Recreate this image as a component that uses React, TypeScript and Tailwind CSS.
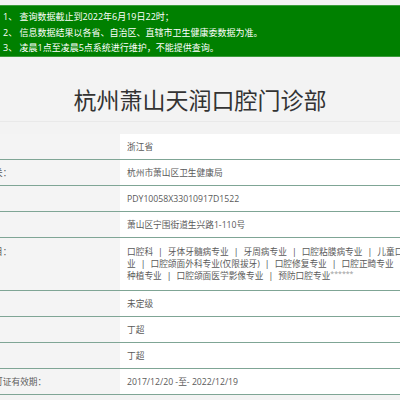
const rows: { label: string; value: string }[] = [
  { label: "省份：", value: "浙江省" },
  { label: "登记机关：", value: "杭州市萧山区卫生健康局" },
  { label: "登记号：", value: "PDY10058X33010917D1522" },
  { label: "地址：", value: "萧山区宁围街道生兴路1-110号" },
];

const rowsAfter: { label: string; value: string }[] = [
  { label: "等级：", value: "未定级" },
  { label: "法人：", value: "丁超" },
  { label: "负责人：", value: "丁超" },
  { label: "执业许可证有效期：", value: "2017/12/20 -至- 2022/12/19" },
];

const subjectLines = [
  ["口腔科", "牙体牙髓病专业", "牙周病专业", "口腔粘膜病专业", "儿童口腔专"],
  ["业", "口腔颌面外科专业(仅限拔牙)", "口腔修复专业", "口腔正畸专业", "口腔"],
  ["种植专业", "口腔颌面医学影像专业", "预防口腔专业"],
];

function Row({ label, children, tall }: { label: string; children: React.ReactNode; tall?: boolean }) {
  return (
    <div className="flex border-b border-[#7fa595]">
      <div
        className={`w-[160px] shrink-0 bg-[#f4f4f4] pl-[8px] leading-[12px] whitespace-nowrap ${
          tall ? "py-[8px]" : "py-[6.5px]"
        }`}
      >
        {label}
      </div>
      <div className={`flex-1 bg-white pl-[7px] leading-[12px] ${tall ? "py-[8px]" : "py-[6.5px]"}`}>
        {children}
      </div>
    </div>
  );
}

export default function App() {
  return (
    <div
      className="h-[400px] w-[400px] overflow-hidden bg-[#f3f3f3] pt-[5px] text-[8.7px] text-[#5a5a5a]"
      style={{ fontFamily: '"Open Sans", "Noto Sans CJK SC", sans-serif' }}
    >
      <div className="border-y border-[#3c9c3c] bg-[#008000] px-[3px] pt-[3px] pb-[0.5px] text-[9px] leading-[15.5px] text-white">
        <p>1、 查询数据截止到2022年6月19日22时；</p>
        <p>2、 信息数据结果以各省、自治区、直辖市卫生健康委数据为准。</p>
        <p>3、 凌晨1点至凌晨5点系统进行维护，不能提供查询。</p>
      </div>

      <div
        className="border-b border-[#e9e9e9] pt-[27px] pb-[7px] text-center text-[23px] leading-[30px] text-[#333]"
        style={{ fontFamily: '"Noto Sans CJK SC", sans-serif' }}
      >
        杭州萧山天润口腔门诊部
      </div>

      <div className="mt-[12px] ml-[-40px] w-[560px]">
        {rows.map((r) => (
          <Row key={r.label} label={r.label}>
            {r.value}
          </Row>
        ))}
        <Row label="诊疗科目：" tall>
          {subjectLines.map((line, i) => (
            <div key={i} className="whitespace-nowrap">
              {line.map((item, j) => (
                <span key={j}>
                  {j > 0 && <span className="mx-[5px] text-[#444]">|</span>}
                  {item}
                </span>
              ))}
              {i === 2 && <span className="align-top text-[7px] leading-[8px] text-[#999]">******</span>}
            </div>
          ))}
        </Row>
        {rowsAfter.map((r) => (
          <Row key={r.label} label={r.label}>
            {r.value}
          </Row>
        ))}
      </div>
    </div>
  );
}
